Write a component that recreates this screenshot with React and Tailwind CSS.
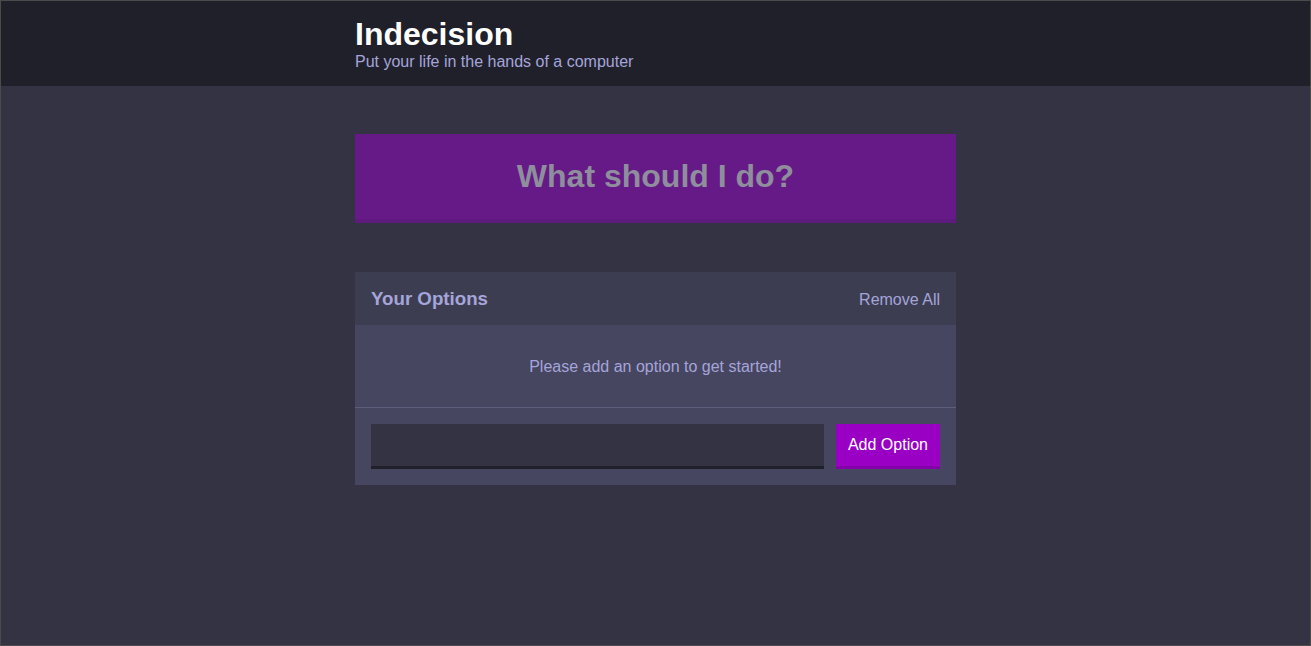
import React, { useState } from 'react';

const App = () => {
    const [options, setOptions] = useState([]);
    const [text, setText] = useState('');

    const handleAdd = (e) => {
        e.preventDefault();
        if (!text.trim()) return;
        setOptions([...options, text.trim()]);
        setText('');
    };

    return (
        <div className="min-h-screen bg-[#333344] border border-[#4b4b4b] font-['Liberation_Sans',Arial,sans-serif]">
            {/* header */}
            <header className="bg-[#20202b] h-[85px]">
                <div className="w-[601px] mx-auto pt-[15px]">
                    <h1 className="text-[32px] leading-[36px] font-bold text-white">Indecision</h1>
                    <h2 className="text-[16px] leading-[20px] text-[#a5a5d9]">Put your life in the hands of a computer</h2>
                </div>
            </header>

            <div className="w-[601px] mx-auto pt-[48px]">
                <button
                    disabled={options.length === 0}
                    className="w-full h-[89px] pb-[2px] bg-[#661a87] border-b-4 border-[#5e1a7c] text-[32px] font-bold text-[#8e8e9c]"
                >
                    What should I do?
                </button>

                <div className="mt-[49px] bg-[#464660]">
                    <div className="h-[53px] bg-[#3d3d52] flex items-center justify-between px-4 pt-[2px]">
                        <h3 className="text-[18.7px] font-bold text-[#a5a5d9]">Your Options</h3>
                        <button onClick={() => setOptions([])} className="text-[16px] text-[#a5a5d9]">Remove All</button>
                    </div>
                    {options.length === 0 ? (
                        <p className="h-[83px] pt-[2px] flex items-center justify-center text-[16px] text-[#a5a5d9] border-b border-[#5e5e7c]">
                            Please add an option to get started!
                        </p>
                    ) : (
                        <div className="border-b border-[#5e5e7c]">
                            {options.map((o, i) => (
                                <p key={i} className="px-4 py-4 text-[#a5a5d9]">{i + 1}. {o}</p>
                            ))}
                        </div>
                    )}
                    <form onSubmit={handleAdd} className="flex gap-3 p-4">
                        <input
                            value={text}
                            onChange={(e) => setText(e.target.value)}
                            className="flex-1 h-[45px] bg-[#333344] border-b-[3px] border-[#20202b] outline-none px-3 text-[#a5a5d9]"
                        />
                        <button className="h-[45px] px-3 bg-[#9900c4] border-b-[3px] border-[#8400a8] text-[16px] text-white">Add Option</button>
                    </form>
                </div>
            </div>
        </div>
    );
};

export default App;
